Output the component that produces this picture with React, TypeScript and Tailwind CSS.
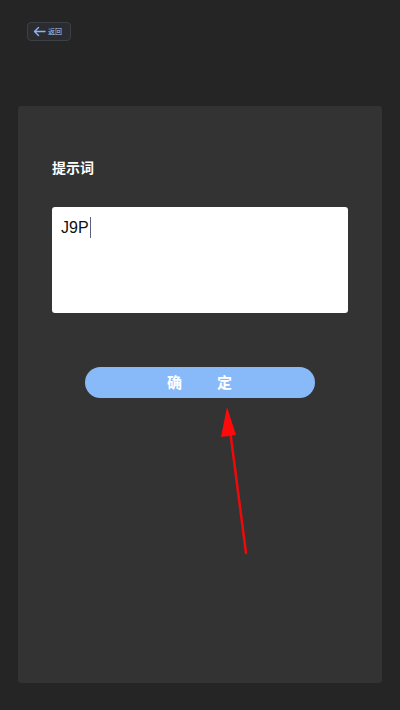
export default function App() {
  const prompt = 'J9P';

  return (
    <div
      className="relative w-[400px] h-[710px] bg-[#252525] overflow-hidden"
      style={{ fontFamily: '"Noto Sans", "Noto Sans CJK SC", sans-serif' }}
    >
      {/* Header */}
      <div className="h-[106px] pt-[22px] pl-[27px]">
        <button className="flex items-center gap-[2px] h-[19px] w-[44px] pl-[5px] rounded-[4px] border border-[#3c3f45] bg-[#2a2c30]">
          <svg width="13" height="11" viewBox="0 0 13 11" fill="none" stroke="#8ab4f8" strokeWidth="1.4" strokeLinecap="round" strokeLinejoin="round">
            <path d="M12 5.5H1.5M5.5 1.5L1.5 5.5L5.5 9.5" />
          </svg>
          <span className="text-[7px] leading-none text-[#a9c8f5]">返回</span>
        </button>
      </div>

      {/* Card */}
      <div className="mx-[18px] h-[577px] rounded-[3px] bg-[#333333] px-[34px] pt-[52px]">
        <div className="text-[14px] leading-[20px] font-bold text-white">提示词</div>
        {/* Prompt field, shown focused with caret */}
        <div
          className="mt-[29px] w-[296px] h-[106px] rounded-[3px] bg-white pl-[9px] pt-[10px] text-[16px] leading-[20px] text-[#111]"
          style={{ fontFamily: '"Liberation Sans", Arial, sans-serif' }}
        >
          <span className="inline-flex items-center">
            {prompt}
            <span className="inline-block w-[1.5px] h-[21px] ml-[1px] bg-[#5d6080]" />
          </span>
        </div>
        <div className="flex justify-center mt-[54px]">
          <button className="w-[230px] h-[31px] rounded-full bg-[#88baf9] text-[15px] font-bold text-white tracking-[1px]">
            确<span className="inline-block w-[34px]" />定
          </button>
        </div>
      </div>

      {/* Annotation arrow */}
      <svg className="absolute left-0 top-0 pointer-events-none" width="400" height="710">
        <line x1="246" y1="553" x2="230" y2="430" stroke="#ee0a0a" strokeWidth="2.5" strokeLinecap="round" />
        <polygon points="227,407 221,437 236,435" fill="#ff0a0a" />
      </svg>
    </div>
  );
}
